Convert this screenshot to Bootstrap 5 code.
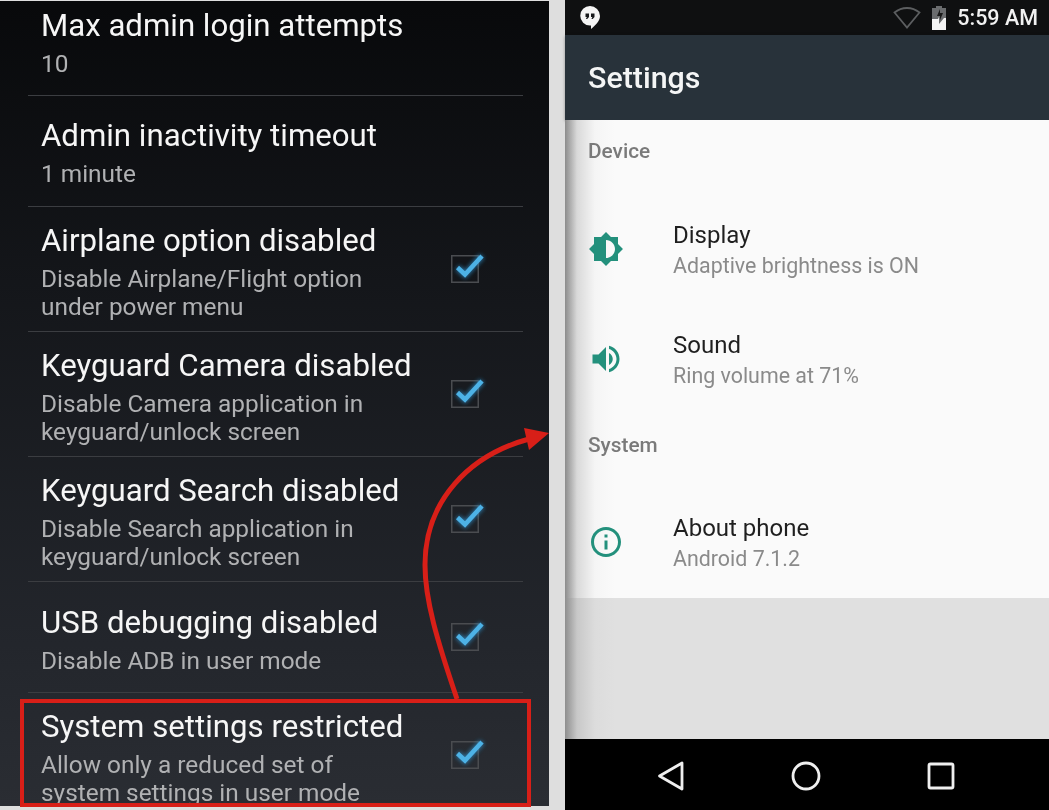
<!DOCTYPE html>
<html lang="en">
<head>
<meta charset="utf-8">
<title>Settings comparison</title>
<link href="https://cdn.jsdelivr.net/npm/bootstrap@5.3.0/dist/css/bootstrap.min.css" rel="stylesheet">
<style>
html,body{margin:0;height:810px;overflow:hidden;background:#dedede;font-family:Roboto,"Liberation Sans",sans-serif}
.stage{width:1049px;height:810px}
.lock-panel{width:549px;height:805px;margin-top:1px;margin-right:16px;overflow:hidden;padding:0 26px 0 28px;background:linear-gradient(180deg,#08090b 0%,#14161a 35%,#23262c 80%,#2a2d33 100%);filter:blur(.45px)}
.lock-row{padding:16px 0 10px;border-bottom:1px solid #3b3d41}
.lock-row-plain{padding:22px 0 18px}
.lock-row-usb{padding:23px 0 17px}
.lock-row-first{padding:7px 0 17px}
.lock-row-last{border-bottom:0;padding-bottom:0}
.lock-text{width:382px;padding-left:13px;overflow:hidden;white-space:nowrap}
.lock-title{font-size:31.200px;line-height:34px;color:#f6f6f6;padding-top:1px;margin-bottom:7px}
.lock-sub{font-size:24.400px;line-height:28px;color:#b0b1b3}
.tick-wrap{margin:0 44px 6px auto;width:28px;height:28px;flex:none}
.tick-wrap svg{overflow:visible;display:block}
.phone{width:484px;height:810px;filter:blur(.45px)}
.phone-status{height:35px;background:#0f1011;padding:0 11px 0 14px}
.phone-clock{font-size:21.500px;font-weight:500;color:#f1f1f1;line-height:1;margin-left:10px}
.phone-batt{margin-left:10px}
.phone-bar{height:85px;background:#28323a;padding:2px 0 0 23px;box-shadow:0 1px 3px rgba(0,0,0,.35);font-size:30.400px;font-weight:500;color:#f4f5f5;line-height:1}
.phone-content{height:478px;background:linear-gradient(90deg,#8c8c8c 0,#d9d9d9 12px,#f5f5f5 30px,#fafafa 50px)}
.phone-head{height:73px;padding:18px 0 0 23px;font-size:20.800px;line-height:24px;font-weight:500;color:#7a7a7a}
.phone-head-first{height:75px;padding-top:19px}
.phone-row{height:110px}
.phone-icon{width:36px;height:36px;margin:0 49px 3px 23px;fill:#23907c;flex:none}
.phone-name{font-size:24px;line-height:30px;color:#1f1f1f}
.phone-desc{font-size:21.400px;line-height:30px;color:#8a8a8a;margin-top:1px}
.phone-empty{height:141px;background:linear-gradient(90deg,#8e8e8e 0,#c8c8c8 12px,#dcdcdc 30px,#e0e0e0 50px)}
.phone-nav{height:71px;background:#000;padding:3px 0 0 38px}
.nav-cell{width:135px}
.mark-box{left:20px;top:699px;width:511px;height:108px;border:4px solid #d81f18}
.mark-arrow{left:0;top:0;pointer-events:none}
</style>
</head>
<body>
<div class="stage d-flex position-relative">
  <section class="lock-panel flex-shrink-0">
    <div class="lock-row lock-row-first d-flex align-items-center">
      <div class="lock-text"><div class="lock-title">Max admin login attempts</div><div class="lock-sub">10</div></div>
    </div>
    <div class="lock-row lock-row-plain d-flex align-items-center">
      <div class="lock-text"><div class="lock-title">Admin inactivity timeout</div><div class="lock-sub">1 minute</div></div>
    </div>
    <div class="lock-row d-flex align-items-center">
      <div class="lock-text"><div class="lock-title">Airplane option disabled</div><div class="lock-sub">Disable Airplane/Flight option<br>under power menu</div></div>
      <div class="tick-wrap"><svg width="28" height="28" viewBox="0 0 28 28"><defs><filter id="gl" x="-50%" y="-50%" width="200%" height="200%"><feGaussianBlur stdDeviation="2.2"/></filter></defs><rect x=".75" y=".75" width="26.5" height="26.5" fill="none" stroke="#4a4c50" stroke-width="1.5"/><path d="M6.500 12.500L14 19.500L31 1" fill="none" stroke="#2f93cf" stroke-width="6" filter="url(#gl)" opacity=".75"/><path d="M6.500 12.500L14 19.500L31 1" fill="none" stroke="#4db2e6" stroke-width="4.500"/></svg></div>
    </div>
    <div class="lock-row d-flex align-items-center">
      <div class="lock-text"><div class="lock-title">Keyguard Camera disabled</div><div class="lock-sub">Disable Camera application in<br>keyguard/unlock screen</div></div>
      <div class="tick-wrap"><svg width="28" height="28" viewBox="0 0 28 28"><rect x=".75" y=".75" width="26.5" height="26.5" fill="none" stroke="#4a4c50" stroke-width="1.5"/><path d="M6.500 12.500L14 19.500L31 1" fill="none" stroke="#2f93cf" stroke-width="6" filter="url(#gl)" opacity=".75"/><path d="M6.500 12.500L14 19.500L31 1" fill="none" stroke="#4db2e6" stroke-width="4.500"/></svg></div>
    </div>
    <div class="lock-row d-flex align-items-center">
      <div class="lock-text"><div class="lock-title">Keyguard Search disabled</div><div class="lock-sub">Disable Search application in<br>keyguard/unlock screen</div></div>
      <div class="tick-wrap"><svg width="28" height="28" viewBox="0 0 28 28"><rect x=".75" y=".75" width="26.5" height="26.5" fill="none" stroke="#4a4c50" stroke-width="1.5"/><path d="M6.500 12.500L14 19.500L31 1" fill="none" stroke="#2f93cf" stroke-width="6" filter="url(#gl)" opacity=".75"/><path d="M6.500 12.500L14 19.500L31 1" fill="none" stroke="#4db2e6" stroke-width="4.500"/></svg></div>
    </div>
    <div class="lock-row lock-row-usb d-flex align-items-center">
      <div class="lock-text"><div class="lock-title">USB debugging disabled</div><div class="lock-sub">Disable ADB in user mode</div></div>
      <div class="tick-wrap"><svg width="28" height="28" viewBox="0 0 28 28"><rect x=".75" y=".75" width="26.5" height="26.5" fill="none" stroke="#4a4c50" stroke-width="1.5"/><path d="M6.500 12.500L14 19.500L31 1" fill="none" stroke="#2f93cf" stroke-width="6" filter="url(#gl)" opacity=".75"/><path d="M6.500 12.500L14 19.500L31 1" fill="none" stroke="#4db2e6" stroke-width="4.500"/></svg></div>
    </div>
    <div class="lock-row lock-row-last d-flex align-items-center">
      <div class="lock-text"><div class="lock-title">System settings restricted</div><div class="lock-sub">Allow only a reduced set of<br>system settings in user mode</div></div>
      <div class="tick-wrap"><svg width="28" height="28" viewBox="0 0 28 28"><rect x=".75" y=".75" width="26.5" height="26.5" fill="none" stroke="#4a4c50" stroke-width="1.5"/><path d="M6.500 12.500L14 19.500L31 1" fill="none" stroke="#2f93cf" stroke-width="6" filter="url(#gl)" opacity=".75"/><path d="M6.500 12.500L14 19.500L31 1" fill="none" stroke="#4db2e6" stroke-width="4.500"/></svg></div>
    </div>
  </section>

  <section class="phone flex-shrink-0 d-flex flex-column">
    <div class="phone-status d-flex align-items-center">
      <svg width="22" height="25" viewBox="0 0 22 25"><path d="M11 1a10 10 0 0 1 10 10c0 5.500-5 9.500-9 13v-3.500h-1a9.500 9.500 0 0 1 0-19.500z" fill="#f4f4f4"/><path d="M6.500 8.500h3.500v3.500l-1.800 2h-1.300l1-2h-1.400zM12 8.500h3.500v3.500l-1.800 2h-1.300l1-2H12z" fill="#16181a"/></svg>
      <svg class="ms-auto" width="28" height="22" viewBox="0 0 28 22"><path d="M1.500 5.500C9 -.5 19 -.5 26.500 5.500L14 20.500z" fill="none" stroke="#5c5e60" stroke-width="1.800"/></svg>
      <svg class="phone-batt" width="16" height="24" viewBox="0 0 16 24"><path d="M5 0h6v2h4v22H1V2h4z" fill="#6a6c6e"/><path d="M1 13h6l1-2v7l5-6h2v12H1z" fill="#f4f4f4"/><path d="M9 3l-3 7h3v4l3-7H9z" fill="#1a1a1a"/></svg>
      <span class="phone-clock">5:59 AM</span>
    </div>
    <div class="phone-bar d-flex align-items-center">Settings</div>
    <div class="phone-content">
      <div class="phone-head phone-head-first">Device</div>
      <div class="phone-row d-flex align-items-center">
        <svg class="phone-icon" viewBox="0 0 24 24"><path d="M20 15.310L23.310 12 20 8.690V4h-4.690L12 .690 8.690 4H4v4.690L.690 12 4 15.310V20h4.690L12 23.310 15.310 20H20v-4.690zM12 18V6c3.310 0 6 2.690 6 6s-2.690 6-6 6z"/></svg>
        <div><div class="phone-name">Display</div><div class="phone-desc">Adaptive brightness is ON</div></div>
      </div>
      <div class="phone-row d-flex align-items-center">
        <svg class="phone-icon" viewBox="0 0 24 24"><path d="M3 9v6h4l5 5V4L7 9H3zm13.500 3c0-1.770-1.020-3.290-2.500-4.030v8.050c1.480-.730 2.500-2.250 2.500-4.020zM14 3.230v2.060c2.890.860 5 3.540 5 6.710s-2.110 5.850-5 6.710v2.060c4.010-.910 7-4.490 7-8.770s-2.990-7.860-7-8.770z"/></svg>
        <div><div class="phone-name">Sound</div><div class="phone-desc">Ring volume at 71%</div></div>
      </div>
      <div class="phone-head">System</div>
      <div class="phone-row d-flex align-items-center">
        <svg class="phone-icon" viewBox="0 0 24 24"><path d="M11 17h2v-6h-2v6zm1-15C6.480 2 2 6.480 2 12s4.480 10 10 10 10-4.480 10-10S17.520 2 12 2zm0 18c-4.410 0-8-3.590-8-8s3.590-8 8-8 8 3.590 8 8-3.590 8-8 8zm-1-11h2V7h-2v2z"/></svg>
        <div><div class="phone-name">About phone</div><div class="phone-desc">Android 7.1.2</div></div>
      </div>
    </div>
    <div class="phone-empty"></div>
    <div class="phone-nav d-flex align-items-stretch">
      <div class="nav-cell d-flex align-items-center justify-content-center"><svg width="28" height="32" viewBox="0 0 28 32"><path d="M2.500 16L25 3v26z" fill="none" stroke="#efefef" stroke-width="2.800" stroke-linejoin="round"/></svg></div>
      <div class="nav-cell d-flex align-items-center justify-content-center"><svg width="30" height="30" viewBox="0 0 30 30"><circle cx="15" cy="15" r="13" fill="none" stroke="#efefef" stroke-width="2.800"/></svg></div>
      <div class="nav-cell d-flex align-items-center justify-content-center"><svg width="28" height="28" viewBox="0 0 28 28"><rect x="2" y="2" width="24" height="24" rx="1.500" fill="none" stroke="#efefef" stroke-width="2.800"/></svg></div>
    </div>
  </section>

  <div class="mark-box position-absolute"></div>
  <svg class="mark-arrow position-absolute" width="1049" height="810" viewBox="0 0 1049 810">
    <path d="M457 699C437 640 425 600 425 565C425 500 470 455 529 439" fill="none" stroke="#d81f18" stroke-width="5"/>
    <path d="M549 433L524 428L529 450z" fill="#d81f18"/>
  </svg>
</div>
<script src="https://cdn.jsdelivr.net/npm/bootstrap@5.3.0/dist/js/bootstrap.bundle.min.js"></script>
</body>
</html>
